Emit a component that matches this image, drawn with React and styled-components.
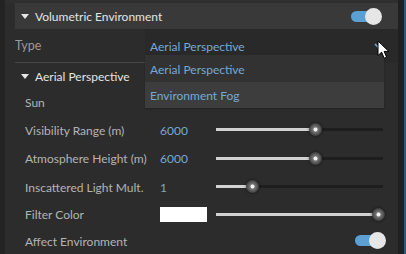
import React from "react";
import styled, { createGlobalStyle } from "styled-components";

const Global = createGlobalStyle`
  html, body { margin: 0; padding: 0; background: #2c2c2c; }
  body { font-family: Lato, "Open Sans", sans-serif; }
`;

const Frame = styled.div`
  width: 406px;
  height: 254px;
  display: flex;
  overflow: hidden;
  position: relative;
  background: #2c2c2c;
`;

const LeftStrip = styled.div`
  width: 5px;
  background: #232323;
  flex: none;
`;

const RightStrip = styled.div`
  width: 8px;
  flex: none;
  display: flex;
  & > div:first-child { flex: 1; background: #202020; }
  & > div:last-child { width: 2px; background: #2e5878; }
`;

const Main = styled.div`
  flex: 1;
  padding-left: 10px;
  display: flex;
  flex-direction: column;
  border-top: 3px solid #2f2f2f;
`;

const SectionHeader = styled.div`
  height: ${(p) => p.$h || 26}px;
  background: ${(p) => (p.$bar ? "#393939" : "transparent")};
  display: flex;
  align-items: center;
  padding-left: 6px;
  padding-right: 16px;
  color: #e4e4e4;
  font-size: 12px;
  flex: none;
`;

const Caret = styled.span`
  width: 0;
  height: 0;
  border-left: 4px solid transparent;
  border-right: 4px solid transparent;
  border-top: 5px solid #e6e6e6;
  margin-right: 6px;
  margin-top: 1px;
`;

const HeaderTitle = styled.span`
  flex: 1;
  padding-top: 1px;
`;

const Toggle = styled.div`
  position: relative;
  width: 31px;
  height: 17px;
  flex: none;
  &::before {
    content: "";
    position: absolute;
    left: 0;
    top: 3px;
    width: 26px;
    height: 11px;
    border-radius: 6px;
    background: #5c9fd3;
  }
  &::after {
    content: "";
    position: absolute;
    right: 0;
    top: 0;
    width: 17px;
    height: 17px;
    border-radius: 50%;
    background: #e6e6e6;
  }
`;

const TypeRow = styled.div`
  position: relative;
  height: 34px;
  display: flex;
  align-items: center;
  border-bottom: 1px solid #464646;
  box-sizing: border-box;
  flex: none;
`;

const TypeLabel = styled.span`
  width: 130px;
  color: #9a9a9a;
  font-size: 12.5px;
`;

const TypeValue = styled.div`
  flex: 1;
  align-self: stretch;
  display: flex;
  align-items: center;
  padding-left: 5px;
  padding-right: 15px;
  background: #292929;
  color: #74a9d6;
  font-size: 12px;
  margin-bottom: -1px;
  & > span { flex: 1; }
`;

const Dropdown = styled.div`
  position: absolute;
  left: 130px;
  top: 26px;
  width: 239px;
  background: #323232;
  box-shadow: 0 1px 2px rgba(0, 0, 0, 0.25);
  z-index: 2;
`;

const DropItem = styled.div`
  height: ${(p) => p.$h}px;
  display: flex;
  align-items: center;
  padding-left: 5px;
  padding-top: 1px;
  box-sizing: border-box;
  color: #74a9d6;
  font-size: 12px;
  background: ${(p) => (p.$hover ? "#3d3d3d" : "transparent")};
`;

const Row = styled.div`
  height: ${(p) => p.$h}px;
  display: grid;
  grid-template-columns: 135px 56px 167px 1fr;
  align-items: center;
  padding-left: 10px;
  flex: none;
`;

const Label = styled.span`
  color: #b4b4b4;
  font-size: 12px;
  white-space: nowrap;
  padding-top: 1px;
`;

const Value = styled.span`
  color: #74a9d6;
  font-size: 12px;
  padding-top: 1px;
`;

const Track = styled.div`
  position: relative;
  height: 3px;
  background: #1e1e1e;
`;

const Fill = styled.div`
  position: absolute;
  left: 0;
  top: 0;
  bottom: 0;
  background: #d2d2d2;
`;

const Thumb = styled.div`
  position: absolute;
  top: 50%;
  width: 13px;
  height: 13px;
  margin-left: -6.5px;
  margin-top: -6.5px;
  border-radius: 50%;
  background: radial-gradient(circle, #f2f2f2 0 1.6px, #767676 2.4px, #5a5a5a 4.5px, #3a3a3a 6.5px);
  box-shadow: 0 0 3px rgba(0, 0, 0, 0.6);
`;

const Swatch = styled.div`
  width: 47px;
  height: 15px;
  background: #ffffff;
`;

const ToggleCell = styled.div`
  grid-column: 3 / 5;
  display: flex;
  justify-content: flex-end;
  padding-right: 12px;
`;

const CursorWrap = styled.svg`
  position: absolute;
  left: 377px;
  top: 40px;
  z-index: 5;
`;

function Slider({ pos }) {
  return (
    <Track>
      <Fill style={{ width: `${pos}px` }} />
      <Thumb style={{ left: `${pos}px` }} />
    </Track>
  );
}

export default function App() {
  return (
    <>
      <Global />
      <Frame>
        <LeftStrip />
        <Main>
          <SectionHeader $bar>
            <Caret />
            <HeaderTitle>Volumetric Environment</HeaderTitle>
            <Toggle />
          </SectionHeader>
          <TypeRow>
            <TypeLabel>Type</TypeLabel>
            <TypeValue>
              <span>Aerial Perspective</span>
              <svg width="9" height="6" viewBox="0 0 9 6">
                <path d="M1 1 L4.5 4.5 L8 1" stroke="#74a9d6" strokeWidth="1.6" fill="none" />
              </svg>
            </TypeValue>
            <Dropdown>
              <DropItem $h={27}>Aerial Perspective</DropItem>
              <DropItem $h={26} $hover>Environment Fog</DropItem>
            </Dropdown>
          </TypeRow>
          <SectionHeader $h={25}>
            <Caret />
            <HeaderTitle>Aerial Perspective</HeaderTitle>
          </SectionHeader>
          <Row $h={27}>
            <Label>Sun</Label>
          </Row>
          <Row $h={29}>
            <Label>Visibility Range (m)</Label>
            <Value>6000</Value>
            <Slider pos={99} />
          </Row>
          <Row $h={28}>
            <Label>Atmosphere Height (m)</Label>
            <Value>6000</Value>
            <Slider pos={99} />
          </Row>
          <Row $h={29}>
            <Label>Inscattered Light Mult.</Label>
            <Value>1</Value>
            <Slider pos={36} />
          </Row>
          <Row $h={26}>
            <Label>Filter Color</Label>
            <Swatch />
            <Slider pos={162} />
          </Row>
          <Row $h={27}>
            <Label>Affect Environment</Label>
            <ToggleCell>
              <Toggle />
            </ToggleCell>
          </Row>
        </Main>
        <RightStrip>
          <div />
          <div />
        </RightStrip>
        <CursorWrap width="14" height="20" viewBox="0 0 14 20">
          <path
            d="M1 1 L1 15.5 L4.6 12.2 L7.2 18.2 L9.6 17.2 L7.1 11.4 L11.8 11.4 Z"
            fill="#ffffff"
            stroke="#000000"
            strokeWidth="1"
            strokeLinejoin="round"
          />
        </CursorWrap>
      </Frame>
    </>
  );
}
